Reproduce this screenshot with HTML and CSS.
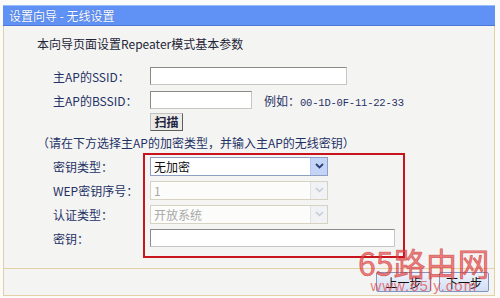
FILE: index.html
```html
<!DOCTYPE html>
<html lang="zh-CN">
<head>
  <meta charset="UTF-8">
  <title>设置向导 - 无线设置</title>
  <link rel="stylesheet" href="styles.css">
</head>
<body>
  <div class="page">
    <div class="frame">
      <div class="title-bar">设置向导 - 无线设置</div>
      <div class="content">
        <div class="intro">本向导页面设置Repeater模式基本参数</div>
        <div class="form">
          <div class="row">
            <div class="label">主AP的SSID：</div>
            <div class="text-input ssid"></div>
          </div>
          <div class="row">
            <div class="label">主AP的BSSID：</div>
            <div class="text-input bssid"></div>
            <div class="hint-inline">例如：<span class="mono">00-1D-0F-11-22-33</span></div>
          </div>
          <div class="row row-btn">
            <div class="label"></div>
            <button class="scan-btn">扫描</button>
          </div>
        </div>
        <div class="note">（请在下方选择主AP的加密类型，并输入主AP的无线密钥）</div>
        <div class="form">
          <div class="row">
            <div class="label">密钥类型：</div>
            <div class="select">
              <span class="select-text">无加密</span>
              <span class="arrow">
                <svg width="9" height="6" viewBox="0 0 9 6"><path d="M1 1 L4.5 4.5 L8 1" fill="none" stroke="#2b3f73" stroke-width="1.8"/></svg>
              </span>
            </div>
          </div>
          <div class="row">
            <div class="label">WEP密钥序号：</div>
            <div class="select disabled">
              <span class="select-text">1</span>
              <span class="arrow">
                <svg width="9" height="6" viewBox="0 0 9 6"><path d="M1 1 L4.5 4.5 L8 1" fill="none" stroke="#c4cad6" stroke-width="1.5"/></svg>
              </span>
            </div>
          </div>
          <div class="row">
            <div class="label">认证类型：</div>
            <div class="select disabled">
              <span class="select-text">开放系统</span>
              <span class="arrow">
                <svg width="9" height="6" viewBox="0 0 9 6"><path d="M1 1 L4.5 4.5 L8 1" fill="none" stroke="#c4cad6" stroke-width="1.5"/></svg>
              </span>
            </div>
          </div>
          <div class="row">
            <div class="label">密钥：</div>
            <div class="text-input key"></div>
          </div>
        </div>
      </div>
      <div class="footer">
        <button class="nav-btn prev">上一步</button>
        <button class="nav-btn next">下一步</button>
      </div>
      <div class="highlight"></div>
    </div>
    <div class="watermark">
      <div class="wm-big">65路由网</div>
      <div class="wm-url">www.65ly.com</div>
    </div>
  </div>
</body>
</html>
```

FILE: styles.css
```css
html, body {
  margin: 0;
  padding: 0;
  background: #fbfbfa;
  font-family: "Noto Sans CJK SC", "DejaVu Sans", sans-serif;
  font-size: 12px;
  overflow: hidden;
}
.page {
  position: relative;
  width: 500px;
  height: 298px;
  padding: 5px 0 0 3px;
  box-sizing: border-box;
}
.frame {
  position: relative;
  width: 492px;
  height: 291px;
  border: 1px solid #e3d1a6;
  border-top: none;
  background: #f4f4f3;
  box-sizing: border-box;
  display: flex;
  flex-direction: column;
}
.title-bar {
  height: 21px;
  margin: 0 -1px;
  background: #6092f6;
  border-top: 1px solid #9bbcfb;
  border-bottom: 1px solid #4d78d6;
  box-sizing: border-box;
  color: #fff;
  line-height: 19px;
  padding-left: 6px;
  text-shadow: 0 0 1px #2f58b8;
}
.content {
  height: 242px;
  padding: 10px 0 0 33px;
  box-sizing: border-box;
}
.intro {
  line-height: 16px;
  color: #1e2436;
  margin-bottom: 12px;
}
.form {
  margin-left: 16px;
}
.row {
  display: flex;
  align-items: center;
  height: 24px;
}
.row-btn {
  height: 20px;
}
.label {
  width: 97px;
  flex: none;
  color: #1f3265;
}
.text-input {
  height: 18px;
  background: #fff;
  border: 1px solid #8a8a8a;
  border-right-color: #c6c6c6;
  border-bottom-color: #c6c6c6;
  box-sizing: border-box;
}
.ssid { width: 197px; }
.bssid { width: 102px; }
.key { width: 245px; }
.hint-inline {
  margin-left: 12px;
  color: #1f3265;
}
.mono {
  font-family: "Liberation Mono", monospace;
  font-size: 10.5px;
  letter-spacing: -0.2px;
}
.scan-btn {
  height: 18px;
  width: 33px;
  padding: 0;
  font-family: inherit;
  font-size: 12px;
  font-weight: bold;
  color: #1d2540;
  background: #ecebe6;
  border: 1px solid #5e5e5e;
  border-top-color: #c0c0c0;
  border-left-color: #c0c0c0;
  line-height: 14px;
}
.note {
  line-height: 22px;
  color: #1f3265;
}
.select {
  width: 178px;
  height: 19px;
  display: flex;
  align-items: center;
  justify-content: space-between;
  background: #fff;
  border: 1px solid #8d9fc2;
  box-sizing: border-box;
}
.select-text {
  padding-left: 3px;
  color: #111;
  line-height: 17px;
}
.arrow {
  width: 16px;
  height: 17px;
  display: flex;
  align-items: center;
  justify-content: center;
  background: #c4d4f7;
  border-left: 1px solid #b4c6ee;
}
.select.disabled {
  border-color: #d6d3c5;
  background: #fcfcfa;
}
.select.disabled .select-text {
  color: #a9a9a9;
}
.select.disabled .arrow {
  background: #f1f2f4;
  border-left-color: #e0e2e8;
}
.footer {
  flex: 1;
  border-top: 1px solid #e3d1a6;
  display: flex;
  justify-content: flex-end;
  align-items: flex-start;
  gap: 8px;
  padding: 3px 5px 0 0;
}
.nav-btn {
  height: 20px;
  padding: 0;
  font-family: inherit;
  font-size: 12px;
  color: #111;
  background: linear-gradient(#eef3fc, #d3def4);
  border: 1px solid #8395bd;
  border-radius: 2px;
}
.prev { width: 55px; }
.next { width: 50px; }
.highlight {
  position: absolute;
  left: 139px;
  top: 148px;
  width: 262px;
  height: 105px;
  border: 2px solid #c8141c;
  box-sizing: border-box;
}
.watermark {
  position: absolute;
  left: 358px;
  top: 244px;
  color: rgba(228, 70, 70, 0.7);
  text-align: center;
}
.wm-big {
  font-size: 32px;
  line-height: 36px;
  -webkit-text-stroke: 0.6px rgba(200, 30, 30, 0.6);
}
.wm-url {
  font-family: "Liberation Sans", sans-serif;
  font-size: 15px;
  letter-spacing: 1px;
  line-height: 12px;
}
```
